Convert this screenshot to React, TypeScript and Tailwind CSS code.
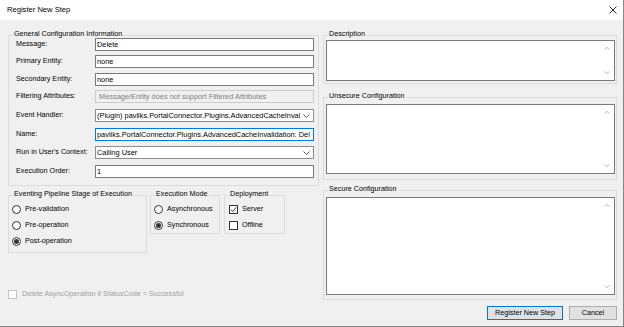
import React from "react";

const Chevron = ({ up = false, color = "#606060", w = 7, h = 4 }: { up?: boolean; color?: string; w?: number; h?: number }) => (
  <svg width={w} height={h} viewBox="0 0 7 4" fill="none" preserveAspectRatio="none">
    <path d={up ? "M0.5 3.5 L3.5 0.5 L6.5 3.5" : "M0.5 0.5 L3.5 3.5 L6.5 0.5"} stroke={color} strokeWidth="1" />
  </svg>
);

const Legend = ({ children }: { children: React.ReactNode }) => (
  <legend className="ml-[4px] px-[1px] h-[5px] leading-[1px] text-black whitespace-nowrap">{children}</legend>
);

const Row = ({ label, mt, children }: { label: string; mt: string; children: React.ReactNode }) => (
  <div className={`flex items-center h-[13px] ${mt}`}>
    <div className="w-[79px] shrink-0 whitespace-nowrap">{label}</div>
    {children}
  </div>
);

const TextBox = ({ text, cls = "border-[#7a7a7a] bg-white text-black" }: { text: string; cls?: string }) => (
  <div className={`flex-1 min-w-0 h-[13px] border flex items-center px-[1px] overflow-hidden whitespace-nowrap text-[7.4px] ${cls}`}>
    {text}
  </div>
);

const Combo = ({ text }: { text: string }) => (
  <div className="flex-1 min-w-0 h-[13px] border border-[#8c8c8c] bg-white flex items-center pl-[1px] overflow-hidden whitespace-nowrap text-[7.4px]">
    <span className="flex-1 min-w-0 overflow-hidden">{text}</span>
    <span className="w-[13px] shrink-0 flex items-center justify-center">
      <Chevron color="#555555" w={7} h={4} />
    </span>
  </div>
);

const TextArea = ({ h }: { h: string }) => (
  <div className={`flex border border-[#7a7a7a] bg-white ${h}`}>
    <div className="flex-1" />
    <div className="w-[15px] flex flex-col justify-between">
      <div className="h-[15px] flex items-center justify-center">
        <Chevron up color="#a8a8a8" w={6} h={3} />
      </div>
      <div className="h-[15px] flex items-center justify-center">
        <Chevron color="#a8a8a8" w={6} h={3} />
      </div>
    </div>
  </div>
);

const Radio = ({ checked = false, label }: { checked?: boolean; label: string }) => (
  <div className="h-[12px] flex items-center gap-[4px] pl-[3px] whitespace-nowrap">
    <div className="w-[9px] h-[9px] shrink-0 rounded-full border border-[#333333] bg-white flex items-center justify-center">
      {checked && <div className="w-[5px] h-[5px] rounded-full bg-[#333333]" />}
    </div>
    <span>{label}</span>
  </div>
);

const Check = ({ checked = false, label }: { checked?: boolean; label: string }) => (
  <div className="h-[12px] flex items-center gap-[4px] pl-[4px] whitespace-nowrap">
    <div className="w-[9px] h-[9px] shrink-0 border border-[#333333] bg-white flex items-center justify-center">
      {checked && (
        <svg width="7" height="7" viewBox="0 0 7 7" fill="none">
          <path d="M0.8 3.6 L2.7 5.5 L6.2 1.3" stroke="#333333" strokeWidth="1" />
        </svg>
      )}
    </div>
    <span>{label}</span>
  </div>
);

export default function App() {
  return (
    <div className="w-[624px] h-[327px] bg-[#f0f0f0] flex flex-col border-r border-b border-[#858585] overflow-hidden font-['Liberation_Sans',Arial,sans-serif] text-[7.2px] text-black">
      {/* Title bar */}
      <div className="h-[20px] shrink-0 bg-white flex items-center justify-between pl-[7px] pr-[6px]">
        <span className="text-[7.6px] leading-none">Register New Step</span>
        <svg width="8" height="8" viewBox="0 0 8 8" fill="none">
          <path d="M0.5 0.5 L7.5 7.5 M7.5 0.5 L0.5 7.5" stroke="#111111" strokeWidth="0.9" />
        </svg>
      </div>

      {/* Body */}
      <div className="flex pt-[13px] pl-[8px]">
        {/* Left column */}
        <div className="w-[311px] shrink-0 flex flex-col">
          <fieldset className="border border-[#dcdcdc] m-0 p-0 min-w-0">
            <Legend>General Configuration Information</Legend>
            <div className="flex flex-col pl-[7px] pr-[4px] pb-[7px]">
              <Row label="Message:" mt="mt-0">
                <TextBox text="Delete" />
              </Row>
              <Row label="Primary Entity:" mt="mt-[4px]">
                <TextBox text="none" />
              </Row>
              <Row label="Secondary Entity:" mt="mt-[5px]">
                <TextBox text="none" />
              </Row>
              <Row label="Filtering Attributes:" mt="mt-[4px]">
                <TextBox
                  text="Message/Entity does not support Filtered Attributes"
                  cls="border-[#cccccc] bg-[#f0f0f0] text-[#808080] pl-[3px]"
                />
              </Row>
              <Row label="Event Handler:" mt="mt-[6px]">
                <Combo text="(Plugin) pavliks.PortalConnector.Plugins.AdvancedCacheInval" />
              </Row>
              <Row label="Name:" mt="mt-[6px]">
                <TextBox
                  text="pavliks.PortalConnector.Plugins.AdvancedCacheInvalidation: Del"
                  cls="border-[#0078d7] bg-white text-black"
                />
              </Row>
              <Row label="Run in User's Context:" mt="mt-[5px]">
                <Combo text="Calling User" />
              </Row>
              <Row label="Execution Order:" mt="mt-[6px]">
                <TextBox text="1" />
              </Row>
            </div>
          </fieldset>

          <div className="flex items-start mt-[7px]">
            <fieldset className="w-[139px] shrink-0 border border-[#dcdcdc] m-0 p-0 min-w-0">
              <Legend>Eventing Pipeline Stage of Execution</Legend>
              <div className="flex flex-col gap-[4px] pt-[5px] pb-[5px]">
                <Radio label="Pre-validation" />
                <Radio label="Pre-operation" />
                <Radio checked label="Post-operation" />
              </div>
            </fieldset>
            <fieldset className="w-[70px] shrink-0 ml-[3px] border border-[#dcdcdc] m-0 p-0 min-w-0">
              <Legend>Execution Mode</Legend>
              <div className="flex flex-col gap-[4px] pt-[5px] pb-[2px]">
                <Radio label="Asynchronous" />
                <Radio checked label="Synchronous" />
              </div>
            </fieldset>
            <fieldset className="w-[61px] shrink-0 ml-[4px] border border-[#dcdcdc] m-0 p-0 min-w-0">
              <Legend>Deployment</Legend>
              <div className="flex flex-col gap-[4px] pt-[5px] pb-[2px]">
                <Check checked label="Server" />
                <Check label="Offline" />
              </div>
            </fieldset>
          </div>

          <div className="mt-[37px] h-[9px] flex items-center gap-[5px] whitespace-nowrap">
            <div className="w-[9px] h-[9px] shrink-0 border border-[#c4c4c4] bg-white" />
            <span className="text-[#a0a0a0]">Delete AsyncOperation if StatusCode = Successful</span>
          </div>
        </div>

        {/* Right column */}
        <div className="w-[294px] shrink-0 ml-[4px] flex flex-col">
          <fieldset className="border border-[#dcdcdc] m-0 p-0 min-w-0">
            <Legend>Description</Legend>
            <div className="pl-[2px] pr-[1px] pt-[2px] pb-[2px]">
              <TextArea h="h-[41px]" />
            </div>
          </fieldset>
          <fieldset className="mt-[11px] border border-[#dcdcdc] m-0 p-0 min-w-0">
            <Legend>Unsecure Configuration</Legend>
            <div className="pl-[2px] pr-[1px] pt-[4px] pb-[5px]">
              <TextArea h="h-[70px]" />
            </div>
          </fieldset>
          <fieldset className="mt-[8px] border border-[#dcdcdc] m-0 p-0 min-w-0">
            <Legend>Secure Configuration</Legend>
            <div className="pl-[2px] pr-[1px] pt-[4px] pb-[4px]">
              <TextArea h="h-[98px]" />
            </div>
          </fieldset>
          <div className="mt-[6px] flex justify-end gap-[6px]">
            <div className="w-[76px] h-[14px] border border-[#0078d7] bg-[#e1e1e1] flex items-center justify-center whitespace-nowrap">
              Register New Step
            </div>
            <div className="w-[48px] h-[14px] border border-[#adadad] bg-[#e1e1e1] flex items-center justify-center">
              Cancel
            </div>
          </div>
        </div>
      </div>
    </div>
  );
}
